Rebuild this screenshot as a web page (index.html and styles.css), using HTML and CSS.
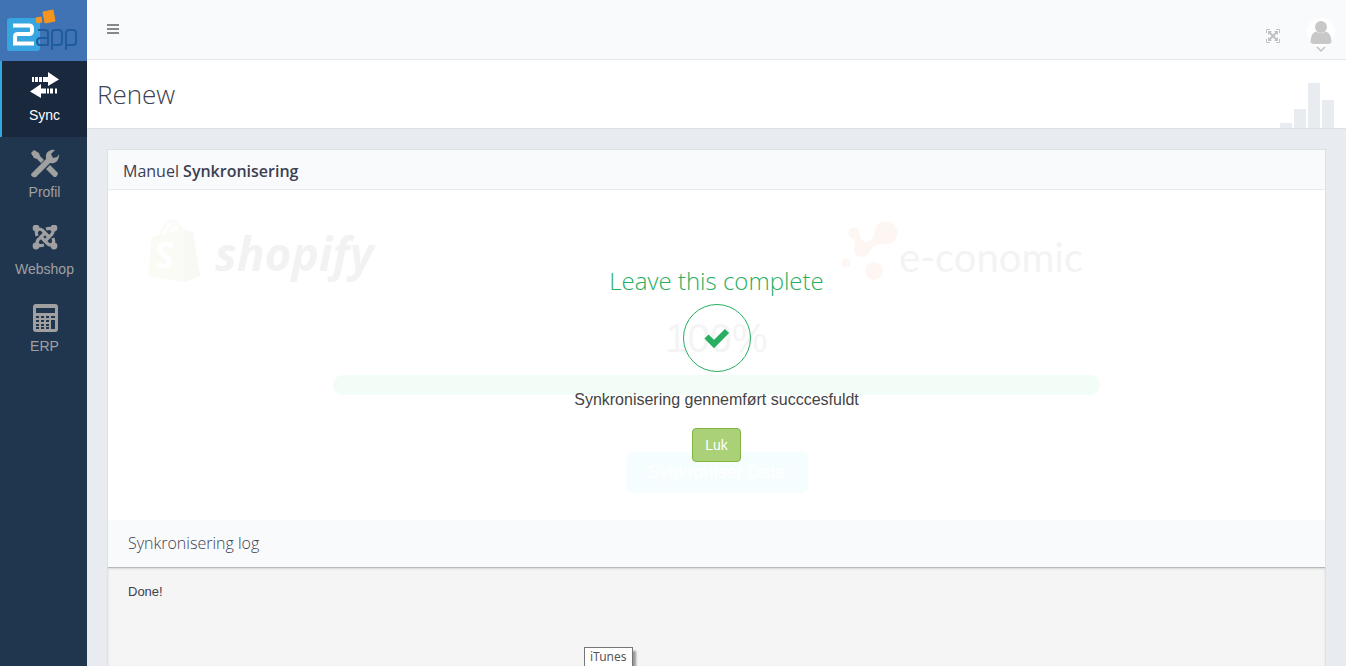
FILE: index.html
```html
<!DOCTYPE html>
<html lang="da">
<head>
<meta charset="utf-8">
<title>2app – Renew</title>
<link rel="stylesheet" href="styles.css">
</head>
<body>
<div class="app">
  <aside class="sidebar">
    <a class="brand" href="#" aria-label="2app">
      <svg width="87" height="61" viewBox="0 0 87 61" aria-hidden="true">
        <rect x="7" y="18" width="33" height="33" rx="3" fill="#36a5e0"/>
        <path d="M13 25.500H29Q32 25.500 32 28.500V31Q32 34 29 34H18Q15 34 15 37V43.500H34" fill="none" stroke="#fff" stroke-width="4"/>
        <g fill="none" stroke="#1f5c9c" stroke-width="2">
          <path d="M38 30H45Q48 30 48 33V45H40Q37 45 37 41.500T40 38H48"/>
          <path d="M52 50V33Q52 30 55 30H59Q62 30 62 33V42Q62 45 59 45H52"/>
          <path d="M66 50V33Q66 30 69 30H73Q76 30 76 33V42Q76 45 73 45H66"/>
        </g>
        <path d="M43 12L53 10L55 21L45 23ZM36 18L41 17L42 22L37 23Z" fill="#f7941e" stroke="#f7941e" stroke-linejoin="round"/>
      </svg>
    </a>
    <nav class="menu">
      <a class="item active" href="#">
        <svg class="icon" width="32" height="32" viewBox="0 0 32 32" fill="currentColor" aria-hidden="true"><path d="M14 6H19V1L30 8.500L19 15V11H14ZM10 6H13V11H10ZM6 6H9V11H6ZM3 6H5V11H3ZM17 17.500H12V13L1 20.500L12 27V22.500H17ZM18 17.500H20V22.500H18ZM21 17.500H24V22.500H21ZM26 17.500H28V22.500H26Z"/></svg>
        <span>Sync</span>
      </a>
      <a class="item" href="#">
        <svg class="icon" width="32" height="32" viewBox="0 0 32 32" fill="currentColor" aria-hidden="true"><path d="M2 5L5 2L10 5L11 8L15 12L12 15L8 11L5 10ZM17 21L21 17L29 25Q29 27 27 29H25ZM3 25L17 11Q16 5 20 3Q23 1 26 2L22 6L24 10L28 9L30 6Q30 12 27 14Q24 16 21 15L7 29Q4 30 3 28Q1 27 3 25Z"/></svg>
        <span>Profil</span>
      </a>
      <a class="item" href="#">
        <svg class="icon" width="32" height="32" viewBox="0 0 32 32" aria-hidden="true">
          <defs>
            <g id="arm">
              <circle cx="-9" cy="-9" r="3.400" fill="currentColor"/>
              <path d="M-9 -9L-6 -6M-8 -1Q-10 -8 -6 -8Q-3 -8 -1 -5L5 1" fill="none" stroke="currentColor" stroke-width="3.200"/>
            </g>
          </defs>
          <g transform="translate(16 12)">
            <use href="#arm"/><use href="#arm" transform="rotate(90)"/><use href="#arm" transform="rotate(180)"/><use href="#arm" transform="rotate(270)"/>
          </g>
        </svg>
        <span>Webshop</span>
      </a>
      <a class="item" href="#">
        <svg class="icon" width="32" height="32" viewBox="0 0 32 32" aria-hidden="true"><path fill="currentColor" fill-rule="evenodd" d="M7 2H26Q29 2 29 5V27Q29 30 26 30H7Q4 30 4 27V5Q4 2 7 2ZM7 6V11H26V6ZM7 14V16H10V14ZM12 14V16H15V14ZM17 14V16H20V14ZM22 14V16H26V14ZM7 18V20H10V18ZM12 18V20H15V18ZM17 18V20H20V18ZM22 18V27H26V18ZM7 22V24H10V22ZM12 22V24H15V22ZM17 22V24H20V22ZM7 25V27H10V25ZM12 25V27H15V25ZM17 25V27H20V25Z"/></svg>
        <span>ERP</span>
      </a>
    </nav>
  </aside>

  <main class="main">
    <header class="topbar">
      <button class="plain toggle" type="button" aria-label="Menu">
        <svg width="12" height="12" viewBox="0 0 12 12" fill="#888"><path d="M0 1H12V3H0ZM0 5H12V7H0ZM0 9H12V11H0Z"/></svg>
      </button>
      <div class="tools">
        <button class="plain" type="button" aria-label="Fuld skærm">
          <svg width="16" height="16" viewBox="0 0 16 16" aria-hidden="true"><g fill="none" stroke="#bfc2c5"><path d="M1.500 5V1.500H5M11 1.500H14.500V5M14.500 11V14.500H11M5 14.500H1.500V11"/><path d="M4 4L12 12M12 4L4 12" stroke-width="2"/></g><path fill="#bfc2c5" d="M3 3H7L3 7ZM13 3V7L9 3ZM13 13H9L13 9ZM3 13V9L7 13Z"/></svg>
        </button>
        <button class="plain" type="button" aria-label="Bruger">
          <svg width="28" height="36" viewBox="0 0 28 36" aria-hidden="true"><circle cx="14" cy="14" r="14" fill="#fff"/><g fill="#c8c8c8"><circle cx="14" cy="9" r="6"/><path d="M9 13.500Q14 17 19 13.500Q24 15 24.500 23Q24.500 26 21 26H7Q3.500 26 3.500 23Q4 15 9 13.500Z"/></g><path d="M10 29L14 33L18 29" fill="none" stroke="#c0c2c5" stroke-width="1.500"/></svg>
        </button>
      </div>
    </header>

    <div class="heading">
      <h1>Renew</h1>
      <svg class="bars" width="54" height="45" viewBox="0 0 54 45" fill="#e8ecf1" aria-hidden="true"><path d="M0 40H12V45H0ZM14 26H26V45H14ZM28 0H40V45H28ZM42 17H54V45H42Z"/></svg>
    </div>

    <section class="panel">
      <h2 class="panel-title">Manuel <strong>Synkronisering</strong></h2>
      <div class="stage">
        <div class="backdrop">
          <div class="logos">
            <div class="shopify">
              <svg width="56" height="64" viewBox="0 0 56 64" aria-hidden="true"><path d="M5 18L36 10L37 63L1 57Z" fill="#95bf47"/><path d="M36 10L46 13L53 57L37 63Z" fill="#7aa33b"/><path d="M13 20Q16 2 25 2Q32 2 34 14M20 16Q24 5 29 5Q35 6 36 12" fill="none" stroke="#95bf47" stroke-width="2"/><path d="M26 27Q13 22 13 31C13 38 23 37 22 43Q21 50 10 45" fill="none" stroke="#fff" stroke-width="5"/></svg>
              <span>shopify</span>
            </div>
            <div class="economic">
              <svg width="57" height="64" viewBox="0 0 57 64" fill="#f26b21" aria-hidden="true"><circle cx="44" cy="14" r="11.500"/><circle cx="12" cy="14" r="5.500"/><circle cx="20" cy="30" r="8"/><circle cx="4" cy="44" r="4.500"/><circle cx="32" cy="52" r="9"/><path d="M8 18L17 13Q18 21 24 23Q33 21 33 12L46 25Q36 23 28 31L14 32Q14 21 8 18Z"/></svg>
              <span>e-conomic</span>
            </div>
          </div>
          <div class="percent">100%</div>
          <div class="progress"></div>
          <button class="start" type="button" disabled>Synkroniser Data</button>
        </div>
        <div class="result">
          <h3>Leave this complete</h3>
          <div class="check">
            <svg width="28" height="24" viewBox="0 0 28 24" aria-hidden="true"><path d="M3.500 10.500L11 18L24 5" fill="none" stroke="#27ae60" stroke-width="6"/></svg>
          </div>
          <p>Synkronisering gennemført succcesfuldt</p>
          <button class="close" type="button">Luk</button>
        </div>
      </div>
      <h2 class="log-title">Synkronisering log</h2>
      <div class="log">Done!</div>
    </section>
  </main>
</div>
<div class="tooltip" role="tooltip">iTunes</div>
</body>
</html>
```
FILE: styles.css
```css
* { box-sizing: border-box; }
body {
  margin: 0;
  overflow: hidden;
  background: #e8ecf1;
  color: #3d4051;
  font-family: "Liberation Sans", Arial, sans-serif;
  font-size: 13px;
}
h1, h2, h3, p { margin: 0; }
button { font-family: inherit; }
.app { display: flex; height: 100vh; }

.sidebar { flex: none; width: 87px; background: #20364f; }
.brand { display: block; height: 61px; background: #3f73b3; }
.brand svg { display: block; }
.menu { display: flex; flex-direction: column; gap: 1px; }
.item {
  display: flex;
  flex-direction: column;
  align-items: center;
  gap: 4px;
  height: 76px;
  padding: 10px 0 0;
  border-left: 2px solid transparent;
  color: #a0a0a0;
  font-size: 14px;
  line-height: 16px;
  text-decoration: none;
}
.item.active { background: #19283d; border-left-color: #36a5e0; color: #fff; }
.icon { display: block; flex: none; }

.main { flex: 1; min-width: 0; display: flex; flex-direction: column; }
.topbar {
  flex: none;
  display: flex;
  justify-content: space-between;
  height: 60px;
  padding: 17px 11px 0 20px;
  background: #f9fafc;
  border-bottom: 1px solid #e3e7ec;
}
.plain { display: flex; padding: 0; border: 0; background: none; }
.toggle { padding-top: 6px; }
.tools { display: flex; align-items: center; gap: 26px; height: 38px; }
.heading {
  flex: none;
  display: flex;
  align-items: center;
  justify-content: space-between;
  height: 69px;
  padding: 0 12px 0 10px;
  background: #fff;
  border-bottom: 1px solid #dce1e6;
}
.heading h1 { font: 300 26px/36px "Open Sans", sans-serif; }
.bars { align-self: flex-end; }

.panel {
  flex: 1;
  display: flex;
  flex-direction: column;
  margin: 20px 20px 0;
  border: 1px solid #dce1e6;
  border-bottom: 0;
  background: #fff;
}
.panel-title {
  flex: none;
  height: 40px;
  padding: 0 15px;
  background: #f9fafc;
  border-bottom: 1px solid #e8ecf1;
  font: 400 16px/42px "Open Sans", sans-serif;
}
.panel-title strong { font-weight: 600; }
.stage { position: relative; flex: none; }
.backdrop {
  display: flex;
  flex-direction: column;
  align-items: center;
  height: 330px;
  padding-top: 29px;
  opacity: 0.05;
}
.logos { display: flex; width: 100%; height: 64px; padding-left: 39px; }
.shopify, .economic { display: flex; width: 59%; }
.economic { width: auto; }
.shopify span {
  padding-left: 12px;
  color: #222;
  font: italic 700 46px/68px "Open Sans", sans-serif;
}
.economic span { color: #333; font: 400 40px/76px Lato, sans-serif; }
.percent { margin-top: 32px; color: #444; font-size: 40px; line-height: 46px; }
.progress { width: 63%; height: 20px; margin-top: 14px; border-radius: 10px; background: #30dc80; }
.start {
  width: 182px;
  height: 41px;
  margin-top: 57px;
  border: 0;
  border-radius: 6px;
  background: #50e6f0;
  color: #fff;
  font-size: 18px;
}
.result {
  position: absolute;
  inset: 0;
  display: flex;
  flex-direction: column;
  align-items: center;
  padding-top: 74px;
}
.result h3 { color: #27ae60; font: 300 24px/34px "Open Sans", sans-serif; }
.check {
  display: flex;
  align-items: center;
  justify-content: center;
  width: 68px;
  height: 68px;
  margin-top: 6px;
  border: 1px solid #27ae60;
  border-radius: 50%;
}
.result p { margin-top: 18px; color: #444; font-size: 16px; line-height: 20px; }
.close {
  width: 49px;
  height: 34px;
  margin-top: 18px;
  padding: 0;
  border: 1px solid #82b440;
  border-radius: 4px;
  background: #aad178;
  color: #fff;
  font-size: 14px;
}
.log-title {
  flex: none;
  height: 48px;
  padding: 0 20px;
  background: #f9fafc;
  border-bottom: 1px solid #b5b9bd;
  font: 300 16px/46px "Open Sans", sans-serif;
}
.log {
  flex: 1;
  padding: 16px 20px;
  background: #f5f5f5;
  box-shadow: inset 0 1px 2px #d5d7da;
  line-height: 16px;
}
.tooltip {
  position: absolute;
  left: 584px;
  top: 647px;
  padding: 0 5px;
  border: 1px solid #767676;
  background: #fff;
  box-shadow: 3px 4px 2px #999;
  color: #575757;
  font: 12px/18px "Noto Sans", sans-serif;
}
```
